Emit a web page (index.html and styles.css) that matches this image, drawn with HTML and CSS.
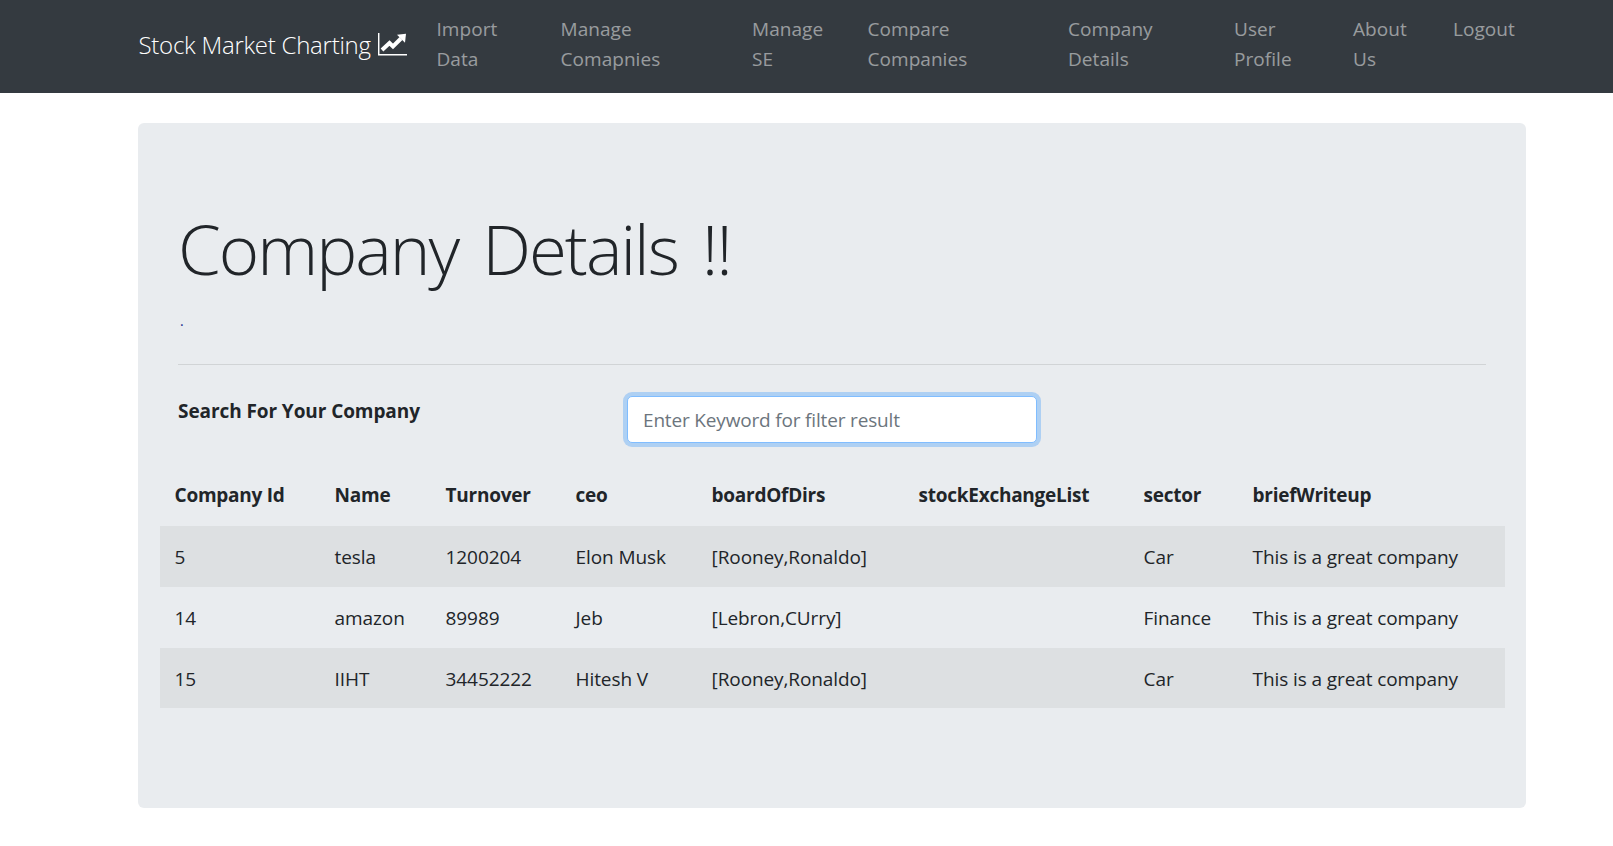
FILE: index.html
```html
<!DOCTYPE html>
<html lang="en">
<head>
<meta charset="utf-8">
<title>Stock Market Charting</title>
<link rel="stylesheet" href="styles.css">
</head>
<body>
<nav class="navbar">
  <a class="brand" href="#">Stock Market Charting
    <svg class="brand-icon" viewBox="0 0 29 23" aria-hidden="true">
      <path class="icon-axis" d="M.7 0V21.8H29"/>
      <path class="icon-line" d="M4 17L11.5 10L15 13.5L23 5.5"/>
      <path class="icon-head" d="M19 1.8L28 .8L27 9.8Z"/>
    </svg>
  </a>
  <ul class="nav">
    <li class="w-import"><a href="#">Import<br>Data</a></li>
    <li class="w-manage"><a href="#">Manage<br>Comapnies</a></li>
    <li class="w-se"><a href="#">Manage<br>SE</a></li>
    <li class="w-compare"><a href="#">Compare<br>Companies</a></li>
    <li class="w-company"><a href="#">Company<br>Details</a></li>
    <li class="w-user"><a href="#">User<br>Profile</a></li>
    <li class="w-about"><a href="#">About<br>Us</a></li>
    <li><a href="#">Logout</a></li>
  </ul>
</nav>
<main class="jumbotron">
  <h1 class="title">Company Details !!</h1>
  <p class="dot">.</p>
  <hr class="rule">
  <div class="search">
    <label class="search-label" for="kw">Search For Your Company</label>
    <input class="search-input" id="kw" type="text" placeholder="Enter Keyword for filter result">
  </div>
  <table class="table">
    <colgroup>
      <col class="c1"><col class="c2"><col class="c3"><col class="c4"><col class="c5"><col class="c6"><col class="c7"><col class="c8">
    </colgroup>
    <thead>
      <tr><th>Company Id</th><th>Name</th><th>Turnover</th><th>ceo</th><th>boardOfDirs</th><th>stockExchangeList</th><th>sector</th><th>briefWriteup</th></tr>
    </thead>
    <tbody>
      <tr><td>5</td><td>tesla</td><td>1200204</td><td>Elon Musk</td><td>[Rooney,Ronaldo]</td><td></td><td>Car</td><td>This is a great company</td></tr>
      <tr><td>14</td><td>amazon</td><td>89989</td><td>Jeb</td><td>[Lebron,CUrry]</td><td></td><td>Finance</td><td>This is a great company</td></tr>
      <tr><td>15</td><td>IIHT</td><td>34452222</td><td>Hitesh V</td><td>[Rooney,Ronaldo]</td><td></td><td>Car</td><td>This is a great company</td></tr>
    </tbody>
  </table>
</main>
</body>
</html>
```
FILE: styles.css
```css
* { box-sizing: border-box; }
html, body { margin: 0; padding: 0; }
body {
  font-family: "Open Sans", "Noto Sans", sans-serif;
  font-size: 19px;
  line-height: 30px;
  letter-spacing: -0.17px;
  color: #212529;
  background: #fff;
}
a { text-decoration: none; color: inherit; }

.navbar {
  height: 93px;
  background: #343a40;
  display: flex;
  align-items: flex-start;
  padding: 0 0 0 138.5px;
}
.brand {
  display: flex;
  align-items: center;
  gap: 7px;
  height: 93px;
  padding-bottom: 4px;
  width: 298px;
  color: #fff;
  font-size: 24px;
  font-weight: 300;
  letter-spacing: -0.25px;
  white-space: nowrap;
}
.brand-icon { width: 29px; height: 23px; flex: none; }
.icon-axis { fill: none; stroke: #fff; stroke-width: 1.5; }
.icon-line { fill: none; stroke: #fff; stroke-width: 4; }
.icon-head { fill: #fff; }
.nav {
  list-style: none;
  margin: 0;
  padding: 14px 0 0;
  display: flex;
  color: rgba(255,255,255,.5);
  letter-spacing: 0.05px;
  white-space: nowrap;
}
.w-import { width: 124px; }
.w-manage { width: 191.5px; }
.w-se { width: 115.5px; }
.w-compare { width: 200.5px; }
.w-company { width: 166px; }
.w-user { width: 119px; }
.w-about { width: 100px; }

.jumbotron {
  margin: 30px 87px 40px 138px;
  height: 685px;
  padding: 80px 40px 0;
  background: #e9ecef;
  border-radius: 6px;
}
.title {
  margin: 0;
  font-size: 69px;
  font-weight: 300;
  line-height: 90px;
  letter-spacing: -2px;
  word-spacing: 8px;
}
.dot { margin: 17px 0 0 2px; font-size: 14px; line-height: 22px; color: #1a2a8a; }
.rule { margin: 32px 0 0; border: 0; border-top: 1px solid rgba(0,0,0,.1); }
.search { display: flex; align-items: flex-start; margin-top: 31px; }
.search-label { width: 449px; font-weight: 700; line-height: 30px; letter-spacing: -0.08px; }
.search-input {
  width: 410px;
  height: 47px;
  padding: 7.5px 15px;
  font: inherit;
  letter-spacing: -0.17px;
  color: #495057;
  background: #fff;
  border: 1px solid #80bdff;
  border-radius: 5px;
  box-shadow: 0 0 0 4px rgba(0,123,255,.25);
  outline: 0;
}
.search-input::placeholder { color: #6c757d; opacity: 1; }

.table {
  width: 1345px;
  margin: 22px 0 0 -18px;
  border-collapse: collapse;
  table-layout: fixed;
}
.c1 { width: 160px; }
.c2 { width: 111px; }
.c3 { width: 130px; }
.c4 { width: 136px; }
.c5 { width: 207px; }
.c6 { width: 225px; }
.c7 { width: 109px; }
.c8 { width: 267px; }
.table th, .table td { padding: 15px 15px 15px 14.6px; text-align: left; white-space: nowrap; vertical-align: top; }
.table th { font-weight: 700; letter-spacing: -0.26px; }
.table td { padding-top: 16px; padding-bottom: 14px; letter-spacing: -0.1px; }
.table tbody tr { border-top: 1px solid transparent; }
.table tbody tr:nth-child(odd) { background: rgba(0,0,0,.05); }
```
